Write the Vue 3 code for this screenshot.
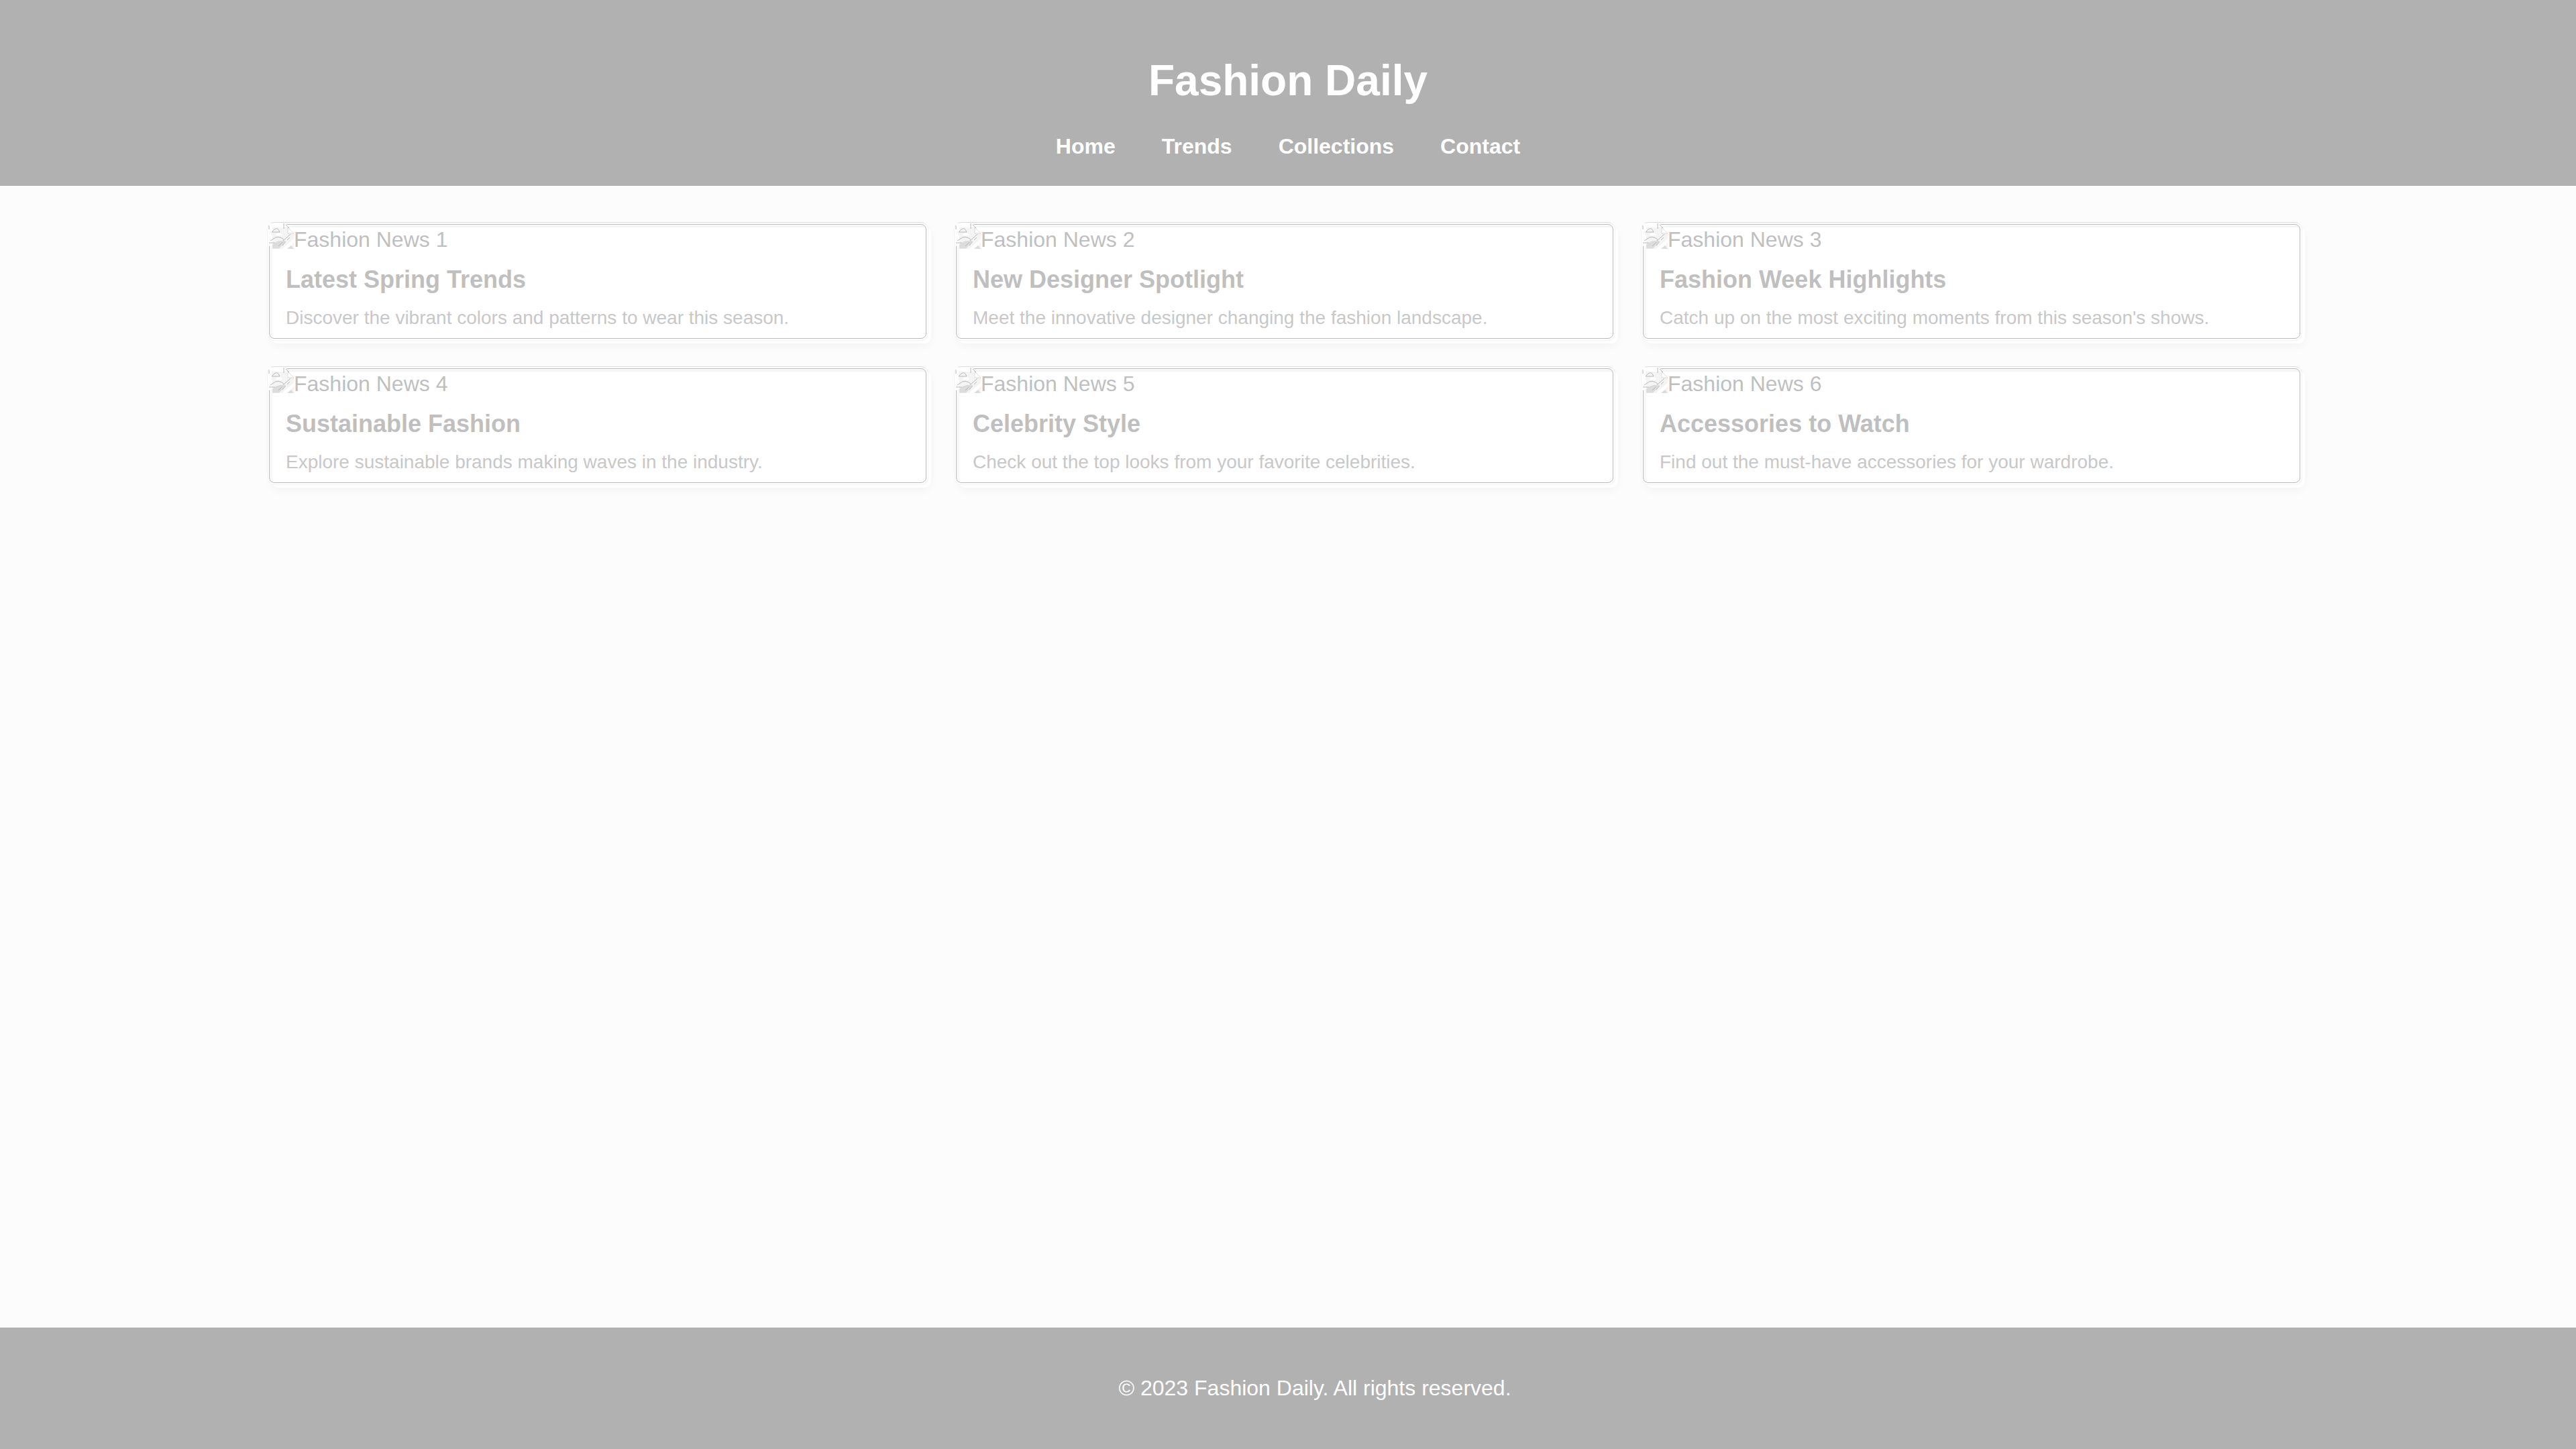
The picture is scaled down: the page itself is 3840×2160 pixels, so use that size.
<script setup>
const links = ['Home', 'Trends', 'Collections', 'Contact']
const articles = [
  { title: 'Latest Spring Trends', text: 'Discover the vibrant colors and patterns to wear this season.' },
  { title: 'New Designer Spotlight', text: 'Meet the innovative designer changing the fashion landscape.' },
  { title: 'Fashion Week Highlights', text: "Catch up on the most exciting moments from this season's shows." },
  { title: 'Sustainable Fashion', text: 'Explore sustainable brands making waves in the industry.' },
  { title: 'Celebrity Style', text: 'Check out the top looks from your favorite celebrities.' },
  { title: 'Accessories to Watch', text: 'Find out the must-have accessories for your wardrobe.' },
]
</script>

<template>
  <div class="page">
    <header class="header">
      <h1>Fashion Daily</h1>
      <nav>
        <a v-for="link in links" :key="link" href="#">{{ link }}</a>
      </nav>
    </header>

    <main class="grid">
      <article v-for="(item, i) in articles" :key="item.title" class="card">
        <div class="picture">
          <svg viewBox="0 0 38 38" width="38" height="38" aria-hidden="true">
            <path d="M0 0h26l12 12v26H6V34H0z" fill="#fff" />
            <path d="M6 6h23l9 9v23H6z" fill="#f4f4f4" />
            <path d="M29 6v9h9z" fill="#fff" stroke="#dcdcdc" />
            <path d="M6 37.500V32q10-9 20-5l-10 10.500z" fill="#dcdcdc" />
            <path d="M11 18q1-4 5-4 4 0 5 4z" fill="#fff" />
            <path d="M20 38L38 23v6L28 38z" fill="#fff" />
            <path d="M28 38l6-5 4 5z" fill="#dcdcdc" />
            <path
              d="M5 13q2-2 4-4 5-4 8 4H5M3 26l3-2q9-8 18 1M1 29h9M23 0v8M26 2l5 5M15 34l6-6M22 26l11-10M21 33l5-6M28 25l4-4M1 9V3"
              fill="none"
              stroke="#b8b8b8"
            />
          </svg>
          <span>Fashion News {{ i + 1 }}</span>
        </div>
        <div class="content">
          <h2>{{ item.title }}</h2>
          <p>{{ item.text }}</p>
        </div>
      </article>
    </main>

    <footer class="footer">
      <p>© 2023 Fashion Daily. All rights reserved.</p>
    </footer>
  </div>
</template>

<style>
body {
  margin: 0;
  background: #fcfcfc;
}
</style>

<style scoped>
.page {
  display: flex;
  flex-direction: column;
  min-height: 100vh;
  font: 32px/37px Arial, "Liberation Sans", sans-serif;
  color: #bfbfbf;
}
.header {
  padding: 83px 40px 40px;
  background: #b1b1b1;
  color: #fff;
  text-align: center;
}
h1 {
  margin: 0 0 43px;
  font-size: 64px;
  line-height: 74px;
}
nav {
  display: flex;
  justify-content: center;
  gap: 69px;
}
nav a {
  color: inherit;
  font-weight: bold;
  text-decoration: none;
}
.grid {
  flex: 1;
  align-content: start;
  display: grid;
  grid-template-columns: repeat(3, 1fr);
  gap: 40px;
  width: calc(80% - 40px);
  margin: 0 auto;
  padding: 60px 0;
}
.card {
  position: relative;
  border: 2px solid #fff;
  border-top-color: #f4f4f4;
  border-left-color: #f8f8f8;
  border-radius: 10px;
  background: #fff;
  box-shadow: 0 4px 16px rgba(0, 0, 0, 0.04);
}
.card::before {
  content: "";
  position: absolute;
  inset: -5px 5px 5px -5px;
  border: 1px solid #bbb;
  border-radius: 8px;
  box-shadow: 0 0 0 2px #fff, 0 -3px 0 0 #dedede, 0 0 0 3px #f4f4f4;
}
.picture {
  position: relative;
  display: flex;
  height: 37px;
}
.picture svg {
  flex: none;
  margin: -6px 0 0 -6px;
}
.content {
  padding: 20px;
}
h2 {
  margin: 0 0 20px;
  font-size: 36px;
  line-height: 41px;
}
.content p {
  margin: 0;
  font-size: 28px;
  line-height: 33px;
  color: #c8c8c8;
}
.footer {
  padding: 72px 0 72px 80px;
  background: #b1b1b1;
  color: #fff;
  text-align: center;
}
.footer p {
  margin: 0;
}
</style>
